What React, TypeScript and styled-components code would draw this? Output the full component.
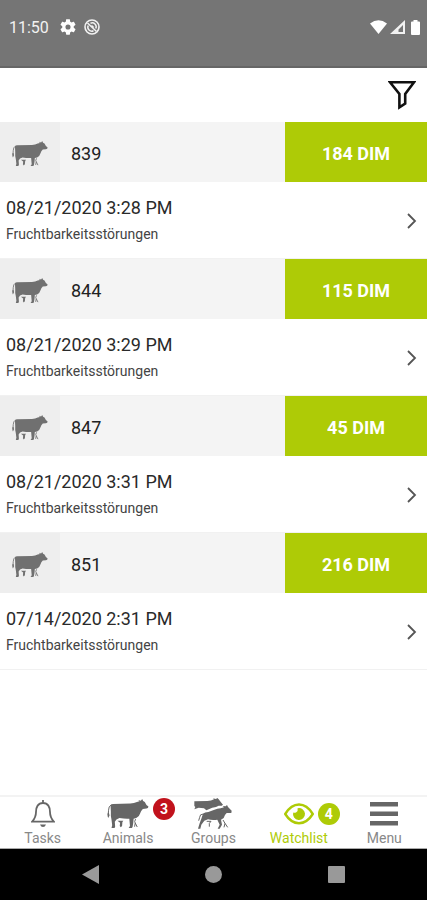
import React from "react";
import styled, { createGlobalStyle } from "styled-components";

const GREEN = "#aecb06";
const GREY = "#757575";

const GlobalStyle = createGlobalStyle`
  * { box-sizing: border-box; }
  body { margin: 0; background: #fff; font-family: Roboto, "Liberation Sans", sans-serif; }
  button { font: inherit; color: inherit; border: 0; padding: 0; margin: 0; background: none; cursor: pointer; }
  svg { display: block; flex: none; }
`;

const Screen = styled.div`
  display: flex;
  flex-direction: column;
  min-height: 100vh;
`;

const StatusBar = styled.div`
  display: flex;
  align-items: center;
  justify-content: space-between;
  height: 68px;
  padding: 0 7px 12px 9px;
  background: ${GREY};
  border-bottom: 2px solid #666;
  color: #fff;
  font-size: 16px;
`;

const StatusGroup = styled.div<{ $gap: number }>`
  display: flex;
  align-items: center;
  gap: ${(p) => p.$gap}px;
`;

const Clock = styled.span`
  margin-right: 3px;
  color: #f2f2f2;
`;

const Toolbar = styled.header`
  display: flex;
  align-items: center;
  justify-content: flex-end;
  height: 54px;
  padding: 0 11px;
`;

const List = styled.main`
  flex: 1;
`;

const AnimalHeader = styled.div`
  display: grid;
  grid-template-columns: 60px 1fr 142px;
  height: 60px;
  background: #f4f4f4;
`;

const AnimalIcon = styled.div`
  display: flex;
  align-items: center;
  justify-content: center;
  padding-top: 2px;
  background: #eee;
  color: #707070;
`;

const AnimalNumber = styled.h2`
  display: flex;
  align-items: center;
  margin: 0;
  padding: 2px 11px 0;
  font-size: 18px;
  font-weight: 400;
  color: #222;
`;

const DaysInMilk = styled.div`
  display: flex;
  align-items: center;
  justify-content: center;
  padding-top: 2px;
  background: ${GREEN};
  color: #fff;
  font-size: 18px;
  font-weight: 700;
`;

const EntryButton = styled.button`
  display: flex;
  align-items: center;
  justify-content: space-between;
  width: 100%;
  height: 77px;
  padding: 1px 10px 0 6px;
  border-bottom: 1px solid #f1f1f1;
  text-align: left;
`;

const EntryDate = styled.div`
  font-size: 18px;
  line-height: 26px;
  color: #2a2a2a;
`;

const EntryNote = styled.div`
  font-size: 14px;
  line-height: 26px;
  color: #444;
`;

const TabBar = styled.nav`
  display: grid;
  grid-template-columns: repeat(5, 1fr);
  height: 54px;
  border-top: 2px solid #f3f3f3;
  border-bottom: 1px solid #aaa;
`;

const TabButton = styled.button<{ $active?: boolean }>`
  display: flex;
  flex-direction: column;
  align-items: center;
  color: ${(p) => (p.$active ? GREEN : "#888")};
  font-size: 14px;
  line-height: 16px;
`;

const TabIcon = styled.span<{ $active?: boolean }>`
  position: relative;
  display: flex;
  align-items: center;
  justify-content: center;
  height: 33px;
  color: ${(p) => (p.$active ? GREEN : "#666")};
`;

const Badge = styled.span<{ $color: string; $top: number }>`
  position: absolute;
  left: calc(100% + 4px);
  top: ${(p) => p.$top}px;
  width: 22px;
  height: 22px;
  border-radius: 50%;
  background: ${(p) => p.$color};
  color: #fff;
  font-size: 14px;
  font-weight: 700;
  line-height: 22px;
  text-align: center;
`;

const SystemBar = styled.footer`
  display: flex;
  justify-content: center;
  gap: 79px;
  height: 51px;
  background: #000;
  color: #999;
`;

const SystemButton = styled.button`
  display: flex;
  align-items: center;
  justify-content: center;
  width: 44px;
`;

const Cow = ({ width, height }: { width: number; height: number }) => (
  <svg width={width} height={height} viewBox="0 0 126 88" aria-hidden="true">
    <path
      fill="currentColor"
      d="M10 19Q11 15 18 15L70 14Q82 13 90 9L98 7L94 3L102 5L106 0L109 6L114 9L119 18L125 23Q125 29 119 29L108 30Q102 36 100 43Q97 54 88 58L80 60L79 72L77 84L75 88L65 88L69 82L67 60Q54 61 37 58L28 62L23 69L24 84L22 88L13 88L15 80L13 63Q10 52 11 39Z"
    />
    <path fill="currentColor" d="M31 66H49L46 70L45 82L41 86L38 82L39 72Z" />
    <path fill="none" stroke="currentColor" strokeWidth="3" d="M12 18Q4 22 4 34L3 48M86 61Q81 70 85 73L83 84M85 73L91 85" />
    <path fill="currentColor" d="M2 42Q-1 50 3 58L7 50L5 42Z" />
  </svg>
);

const Herd = () => (
  <svg width="38" height="31" viewBox="0 0 114 93" aria-hidden="true">
    <path
      fill="currentColor"
      d="M1 10L40 9Q52 9 60 4L57 1L66 3L70 0L74 4L82 14L87 20L83 23H74L66 27Q53 28 46 33L37 37L30 31L14 29L1 34L4 27L1 24Z"
    />
    <path
      fill="currentColor"
      d="M27 47Q32 43 43 42Q58 36 70 32Q80 32 90 28L86 24L95 25L99 21L102 27L113 38L112 45L98 45Q92 50 89 60L81 65L84 80L77 92H71L77 80L70 65Q54 67 42 64L31 68L22 80L19 92H12L17 76L22 62Z"
    />
    <path
      fill="none"
      stroke="currentColor"
      strokeWidth="3"
      d="M28 48Q17 48 17 58L14 68M38 70H51L46 76V86M87 66L93 76L90 88M93 76L101 88"
    />
  </svg>
);

const Bell = () => (
  <svg width="24" height="28" viewBox="0 0 24 28" fill="none" stroke="currentColor" strokeWidth="1.8" aria-hidden="true">
    <path d="M12 0V3M12 3C7 3 5 7 5 12C5 17 3.5 19 1.2 21.6H22.8C20.5 19 19 17 19 12C19 7 17 3 12 3Z" />
    <path d="M9 24.4H15Q14 27 12 27Q10 27 9 24.4Z" fill="currentColor" stroke="none" />
  </svg>
);

const Eye = () => (
  <svg width="30" height="22" viewBox="0 0 30 22" aria-hidden="true">
    <path d="M1.2 11Q7 1.5 15 1.5T28.8 11Q23 20.2 15 20.2T1.2 11Z" fill="none" stroke="currentColor" strokeWidth="2.4" />
    <path d="M13.6 5.2A6 6 0 1 1 9.200 9.500Q10.500 10.300 12.300 9.300Q14.200 8 13.600 5.200Z" fill="currentColor" />
  </svg>
);

const Bars = () => (
  <svg width="28" height="24" viewBox="0 0 28 24" fill="currentColor" aria-hidden="true">
    <path d="M0 0H28V4.500H0ZM0 9.500H28V14H0ZM0 19H28V23.500H0Z" />
  </svg>
);

const Gear = () => (
  <svg width="16" height="16" viewBox="2 2 20 20" fill="currentColor" aria-hidden="true">
    <path d="M19.140 12.940c.04-.3.06-.61.06-.94 0-.32-.02-.64-.07-.94l2.030-1.580c.18-.14.23-.41.12-.61l-1.920-3.320c-.12-.22-.37-.29-.59-.22l-2.390.96c-.5-.38-1.030-.7-1.620-.94L14.400 2.810c-.04-.24-.24-.41-.48-.41h-3.840c-.24 0-.43.17-.47.41L9.250 5.350c-.59.24-1.130.57-1.620.94l-2.390-.96c-.22-.08-.47 0-.59.22L2.740 8.870c-.12.21-.08.47.12.61l2.030 1.580c-.05.3-.09.63-.09.94s.02.64.07.94l-2.030 1.580c-.18.14-.23.41-.12.61l1.920 3.320c.12.22.37.29.59.22l2.390-.96c.5.38 1.030.7 1.620.94l.36 2.540c.05.24.24.41.48.41h3.840c.24 0 .44-.17.47-.41l.36-2.540c.59-.24 1.130-.56 1.620-.94l2.390.96c.22.08.47 0 .59-.22l1.920-3.320c.12-.22.07-.47-.12-.61zM12 15.200A3.200 3.200 0 1 1 12 8.800a3.200 3.200 0 0 1 0 6.400z" />
  </svg>
);

const Blocked = () => (
  <svg width="16" height="16" viewBox="0 0 16 16" fill="none" stroke="#f2f2f2" aria-hidden="true">
    <circle cx="8" cy="8" r="7" strokeWidth="1.600" />
    <path d="M3.500 4L12.500 12.500M6.500 4.200A4 4 0 0 1 11.800 9.500M4.200 6.500A4 4 0 0 0 9.500 11.800M7.500 6.500L9.700 8.500" strokeWidth="1.500" />
  </svg>
);

const Wifi = () => (
  <svg width="17" height="14" viewBox="0 0 17 14" fill="currentColor" aria-hidden="true">
    <path d="M0 3.500Q8.500-3 17 3.500L8.500 14Z" />
  </svg>
);

const Signal = () => (
  <svg width="15" height="14" viewBox="0 0 15 14" fill="currentColor" fillRule="evenodd" aria-hidden="true">
    <path d="M15 0V14H0ZM13 5L8.500 9.500V12H13Z" fillOpacity="0.9" />
  </svg>
);

const Battery = () => (
  <svg width="9" height="15" viewBox="0 0 9 15" fill="currentColor" aria-hidden="true">
    <path d="M2.500 0H6.500V1.500H8Q9 1.500 9 2.500V14Q9 15 8 15H1Q0 15 0 14V2.500Q0 1.500 1 1.500H2.500Z" />
  </svg>
);

const Funnel = () => (
  <svg width="28" height="30" viewBox="0 0 28 30" fill="none" stroke="#111" strokeWidth="2.600" aria-hidden="true">
    <path d="M2 2.200H26L17.200 14V23.500L11.400 27.400V14Z" />
  </svg>
);

const Chevron = () => (
  <svg width="11" height="16" viewBox="0 0 11 16" fill="none" stroke="#555" strokeWidth="1.800" aria-hidden="true">
    <path d="M2 1L9 8L2 15" />
  </svg>
);

const animals = [
  { number: "839", days: 184, date: "08/21/2020 3:28 PM" },
  { number: "844", days: 115, date: "08/21/2020 3:29 PM" },
  { number: "847", days: 45, date: "08/21/2020 3:31 PM" },
  { number: "851", days: 216, date: "07/14/2020 2:31 PM" },
];

export default function App() {
  return (
    <Screen>
      <GlobalStyle />
      <StatusBar>
        <StatusGroup $gap={8}>
          <Clock>11:50</Clock>
          <Gear />
          <Blocked />
        </StatusGroup>
        <StatusGroup $gap={3}>
          <Wifi />
          <Signal />
          <span />
          <Battery />
        </StatusGroup>
      </StatusBar>
      <Toolbar>
        <button aria-label="Filter">
          <Funnel />
        </button>
      </Toolbar>
      <List>
        {animals.map((animal) => (
          <section key={animal.number}>
            <AnimalHeader>
              <AnimalIcon>
                <Cow width={36} height={25} />
              </AnimalIcon>
              <AnimalNumber>{animal.number}</AnimalNumber>
              <DaysInMilk>{animal.days} DIM</DaysInMilk>
            </AnimalHeader>
            <EntryButton>
              <div>
                <EntryDate>{animal.date}</EntryDate>
                <EntryNote>Fruchtbarkeitsstörungen</EntryNote>
              </div>
              <Chevron />
            </EntryButton>
          </section>
        ))}
      </List>
      <TabBar>
        <TabButton>
          <TabIcon>
            <Bell />
          </TabIcon>
          Tasks
        </TabButton>
        <TabButton>
          <TabIcon>
            <Cow width={42} height={29} />
            <Badge $color="#c1121c" $top={1}>3</Badge>
          </TabIcon>
          Animals
        </TabButton>
        <TabButton>
          <TabIcon>
            <Herd />
          </TabIcon>
          Groups
        </TabButton>
        <TabButton $active aria-current="page">
          <TabIcon $active>
            <Eye />
            <Badge $color={GREEN} $top={6}>4</Badge>
          </TabIcon>
          Watchlist
        </TabButton>
        <TabButton>
          <TabIcon>
            <Bars />
          </TabIcon>
          Menu
        </TabButton>
      </TabBar>
      <SystemBar>
        <SystemButton aria-label="Back">
          <svg width="17" height="19" viewBox="0 0 17 19" fill="currentColor">
            <path d="M0 9.500L17 0V19Z" />
          </svg>
        </SystemButton>
        <SystemButton aria-label="Home">
          <svg width="17" height="17" viewBox="0 0 17 17" fill="currentColor">
            <circle cx="8.500" cy="8.500" r="8.500" />
          </svg>
        </SystemButton>
        <SystemButton aria-label="Recent apps">
          <svg width="17" height="17" viewBox="0 0 17 17" fill="currentColor">
            <rect width="17" height="17" rx="1" />
          </svg>
        </SystemButton>
      </SystemBar>
    </Screen>
  );
}
